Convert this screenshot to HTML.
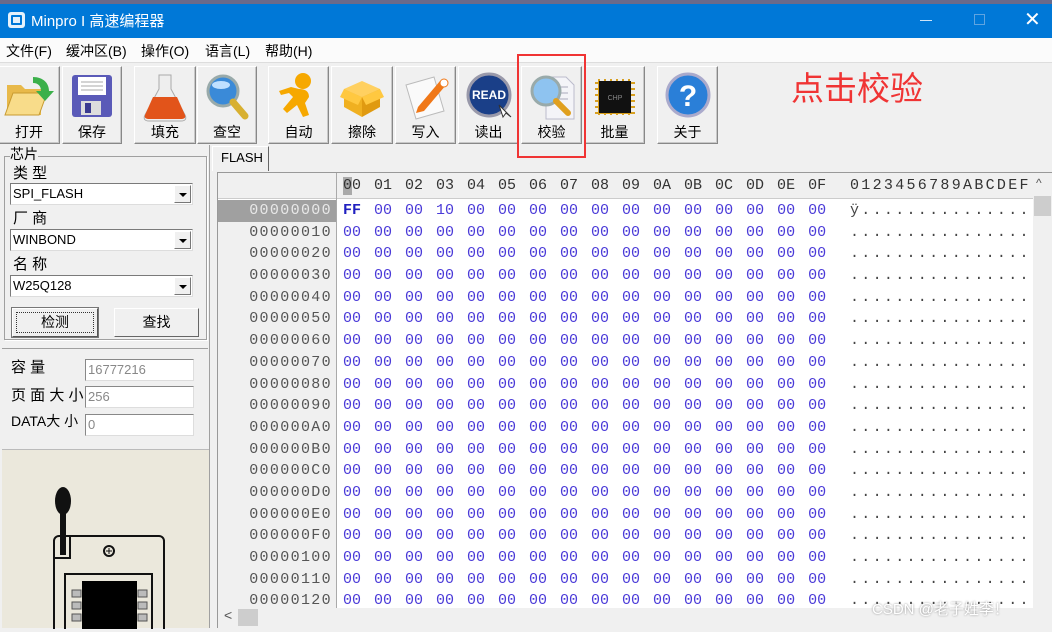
<!DOCTYPE html>
<html><head><meta charset="utf-8"><style>
*{margin:0;padding:0;box-sizing:border-box}
body{width:1052px;height:628px;overflow:hidden;background:#f0f0f0;font-family:"Liberation Sans","Noto Sans CJK SC",sans-serif;position:relative;font-size:14px;color:#000}
.a{position:absolute}
.title{left:0;top:0;width:1052px;height:38px;background:#0078d7;color:#fff}
.menu{left:0;top:38px;width:1052px;height:24px;background:#fbfbfb;font-size:14px}
.menu span{position:absolute;top:3px}
.btn{position:absolute;top:66px;height:78px;background:#f0f0f0;border:1px solid #fff;border-right-color:#888;border-bottom-color:#888;box-shadow:inset -1px -1px #c8c8c8}
.btn .l{position:absolute;bottom:1px;left:0;right:0;text-align:center;font-size:14px}
.btn svg{position:absolute;left:50%;top:4px;margin-left:-26px}
.grp{border:1px solid #a0a0a0;box-shadow:1px 1px #fff}
.sel{position:absolute;left:10px;width:183px;height:22px;background:#fff;border:1px solid #7a7a7a;border-right-color:#ddd;border-bottom-color:#ddd;font-size:13px;line-height:20px;padding-left:2px}
.sel i{position:absolute;right:1px;top:1px;width:17px;height:18px;background:#f0f0f0;border:1px solid #fff;border-right-color:#777;border-bottom-color:#777}
.sel i:after{content:"";position:absolute;left:4px;top:7px;border:4px solid transparent;border-top:4px solid #000}
.inp{position:absolute;left:85px;width:109px;height:22px;background:#fff;border:1px solid #888;border-right-color:#ddd;border-bottom-color:#ddd;font-size:13px;color:#888;line-height:20px;padding-left:2px}
.lab{position:absolute;font-size:15px}
.mono{font-family:"Liberation Mono",monospace;font-size:15px}
#rows{position:absolute;left:218px;top:200px;width:815px;height:408px;overflow:hidden}
.r{position:relative;height:21.7px;line-height:22px;white-space:nowrap}
.r b{position:absolute;left:0;top:0;width:118px;text-align:right;padding-right:4px;font-weight:normal;color:#555;letter-spacing:1.35px;background:#f0f0f0;height:22px}
.r s{position:absolute;left:125px;top:0;text-decoration:none;color:#4a3ad8;word-spacing:4px}
.r u{position:absolute;left:632px;top:0;text-decoration:none;color:#444;letter-spacing:2.3px}
</style></head><body>
<div class="a" style="left:0;top:0;width:1052px;height:4px;background:#6a6a8a"></div>
<div class="a title" style="top:4px;height:34px">
 <div class="a" style="left:8px;top:8px;width:17px;height:16px;background:#e6f2fb;border-radius:3px"><div class="a" style="left:3px;top:3px;width:11px;height:10px;border:2px solid #0078d7;border-radius:1px"></div></div>
 <div class="a" style="left:31px;top:6px;font-size:15px">Minpro I 高速编程器</div>
 <div class="a" style="left:920px;top:16px;width:12px;height:1px;background:#cfe4f7"></div>
 <div class="a" style="left:974px;top:10px;width:11px;height:11px;border:1px solid #5fa4e0"></div>
 <div class="a" style="left:1024px;top:3px;font-size:20px;color:#fff">✕</div>
</div>
<div class="a menu">
 <span style="left:6px">文件(F)</span><span style="left:66px">缓冲区(B)</span><span style="left:141px">操作(O)</span><span style="left:205px">语言(L)</span><span style="left:265px">帮助(H)</span>
</div>
<div class="a" style="left:0;top:62px;width:1052px;height:1px;background:#ddd"></div>

<div class="btn" style="left:-2px;width:62px"><svg width="52" height="52" viewBox="0 0 52 52"><path d="M4 14h14l4 4h16v26H4z" fill="#e8b94a"/><path d="M2 44l8-22h34l-8 22z" fill="#f8dc8a" stroke="#c89a30"/><path d="M30 6c10 0 16 6 16 14h5l-9 10-9-10h5c0-5-3-8-8-8z" fill="#3bb04a"/></svg><div class="l">打开</div></div>
<div class="btn" style="left:62px;width:60px"><svg width="52" height="52" viewBox="0 0 52 52"><rect x="6" y="4" width="40" height="42" rx="3" fill="#5a5ab8"/><rect x="12" y="6" width="28" height="18" fill="#fff"/><path d="M15 11h22M15 15h22M15 19h22" stroke="#aaa"/><rect x="15" y="30" width="20" height="14" fill="#ddd"/><rect x="19" y="32" width="6" height="10" fill="#3a3a90"/></svg><div class="l">保存</div></div>
<div class="btn" style="left:134px;width:62px"><svg width="52" height="52" viewBox="0 0 52 52"><path d="M20 4h12v14l14 26c2 4 0 6-4 6H10c-4 0-6-2-4-6l14-26z" fill="#eee" stroke="#aaa"/><path d="M14 26h24l8 18c1 3-1 4-4 4H10c-3 0-5-1-4-4z" fill="#e2541a"/></svg><div class="l">填充</div></div>
<div class="btn" style="left:197px;width:60px"><svg width="52" height="52" viewBox="0 0 52 52"><circle cx="22" cy="20" r="15" fill="#3a8ad8" stroke="#9aa" stroke-width="3"/><ellipse cx="20" cy="14" rx="9" ry="4" fill="#bfe0ff"/><path d="M32 31l12 14" stroke="#d8b030" stroke-width="7" stroke-linecap="round"/></svg><div class="l">查空</div></div>
<div class="btn" style="left:268px;width:61px"><svg width="52" height="52" viewBox="0 0 52 52"><circle cx="30" cy="10" r="8" fill="#f6a800"/><path d="M26 18c6 0 10 2 10 8l-4 6 4 12-6 2-6-12-10 8-4-4 10-12-4-4-8 2-2-4 12-4z" fill="#f6a800"/></svg><div class="l">自动</div></div>
<div class="btn" style="left:331px;width:62px"><svg width="52" height="52" viewBox="0 0 52 52"><path d="M8 18l18-8 18 8-18 8z" fill="#ffd060"/><path d="M8 18v18l18 10V26z" fill="#f0b020"/><path d="M44 18v18L26 46V26z" fill="#e09a10"/><path d="M8 18l-4 8 18 8 4-8zM44 18l4 8-18 8-4-8z" fill="#ffc840"/></svg><div class="l">擦除</div></div>
<div class="btn" style="left:395px;width:61px"><svg width="52" height="52" viewBox="0 0 52 52"><path d="M6 14l28-8 10 34-28 8z" fill="#fafafa" stroke="#bbb"/><path d="M18 36l22-26 6 4-22 26-8 2z" fill="#f07818"/><circle cx="44" cy="12" r="4" fill="#fff" stroke="#f07818"/></svg><div class="l">写入</div></div>
<div class="btn" style="left:458px;width:61px"><svg width="52" height="52" viewBox="0 0 52 52"><circle cx="26" cy="24" r="21" fill="#1a3f88" stroke="#99a" stroke-width="3"/><text x="26" y="28" font-family="Liberation Sans" font-weight="bold" font-size="12" fill="#fff" text-anchor="middle">READ</text><path d="M36 34l4 12 3-4 5 4z" fill="#fff" stroke="#333"/></svg><div class="l">读出</div></div>
<div class="btn" style="left:521px;width:61px"><svg width="52" height="52" viewBox="0 0 52 52"><path d="M20 6h20l8 8v34H20z" fill="#f4f4f8" stroke="#bbc"/><path d="M26 16h16M26 22h16M26 28h16" stroke="#aab"/><circle cx="20" cy="20" r="14" fill="#8ec3f0" stroke="#9aa" stroke-width="3"/><path d="M30 30l12 12" stroke="#e0a020" stroke-width="6" stroke-linecap="round"/></svg><div class="l">校验</div></div>
<div class="btn" style="left:584px;width:61px"><svg width="52" height="52" viewBox="0 0 52 52"><g stroke="#d8a020" stroke-width="2"><path d="M10 8v36M16 8v36M22 8v36M28 8v36M34 8v36M40 8v36M6 12h40M6 18h40M6 24h40M6 30h40M6 36h40M6 42h40"/></g><rect x="10" y="10" width="32" height="32" fill="#111"/><text x="26" y="29" font-size="7" fill="#888" text-anchor="middle" font-family="Liberation Sans">CHP</text></svg><div class="l">批量</div></div>
<div class="btn" style="left:657px;width:61px"><svg width="52" height="52" viewBox="0 0 52 52"><circle cx="26" cy="24" r="21" fill="#2a7fd8" stroke="#aac" stroke-width="3"/><text x="26" y="35" font-family="Liberation Sans" font-weight="bold" font-size="30" fill="#fff" text-anchor="middle">?</text></svg><div class="l">关于</div></div>

<div class="a" style="left:517px;top:54px;width:69px;height:104px;border:2px solid #f03434"></div>
<div class="a" style="left:791px;top:62px;font-size:33px;color:#f03434">点击校验</div>

<div class="a" style="left:0;top:145px;width:210px;height:483px;border-right:1px solid #a0a0a0"></div>
<div class="a grp" style="left:4px;top:156px;width:203px;height:184px"></div>
<div class="lab" style="left:10px;top:145px;background:#f0f0f0;line-height:18px;font-size:14px">芯片</div>
<div class="lab" style="left:13px;top:162px">类 型</div>
<div class="sel" style="top:183px">SPI_FLASH<i></i></div>
<div class="lab" style="left:13px;top:207px">厂 商</div>
<div class="sel" style="top:229px">WINBOND<i></i></div>
<div class="lab" style="left:13px;top:253px">名 称</div>
<div class="sel" style="top:275px">W25Q128<i></i></div>
<div class="a" style="left:12px;top:308px;width:86px;height:29px;border:1px solid #fff;border-right-color:#555;border-bottom-color:#555;text-align:center;line-height:27px;font-size:14px;box-shadow:0 0 0 1px #777"><div class="a" style="left:3px;top:3px;right:3px;bottom:3px;border:1px dotted #333"></div>检测</div>
<div class="a" style="left:114px;top:308px;width:85px;height:29px;border:1px solid #fff;border-right-color:#666;border-bottom-color:#666;text-align:center;line-height:27px;font-size:14px">查找</div>
<div class="a" style="left:2px;top:348px;width:206px;height:1px;background:#a0a0a0"></div>
<div class="lab" style="left:11px;top:356px">容 量</div>
<div class="inp" style="top:359px">16777216</div>
<div class="lab" style="left:11px;top:384px">页 面 大 小</div>
<div class="inp" style="top:386px">256</div>
<div class="lab" style="left:11px;top:411px;font-size:14px">DATA大 小</div>
<div class="inp" style="top:414px">0</div>
<div class="a" style="left:2px;top:449px;width:207px;height:179px;background:#ebe8dc;border-top:1px solid #bbb">
 <svg width="207" height="179" viewBox="0 0 207 179">
  <rect x="52" y="86" width="110" height="100" rx="5" fill="none" stroke="#111" stroke-width="2"/>
  <path d="M52 108h16v-22" fill="none" stroke="#111" stroke-width="2"/>
  <rect x="58" y="50" width="6" height="55" fill="#111"/><ellipse cx="61" cy="51" rx="8" ry="14" fill="#111"/>
  <circle cx="107" cy="101" r="5" fill="none" stroke="#111" stroke-width="2"/><path d="M104 101h6M107 98v6" stroke="#111"/>
  <rect x="63" y="124" width="87" height="60" fill="none" stroke="#111" stroke-width="2"/>
  <rect x="80" y="131" width="55" height="50" fill="#000"/>
  <g fill="#bbb" stroke="#555"><rect x="70" y="140" width="9" height="7"/><rect x="70" y="152" width="9" height="7"/><rect x="70" y="164" width="9" height="7"/><rect x="136" y="140" width="9" height="7"/><rect x="136" y="152" width="9" height="7"/><rect x="136" y="164" width="9" height="7"/></g>
 </svg>
</div>

<div class="a" style="left:212px;top:146px;width:57px;height:25px;border:1px solid #fff;border-right-color:#666;border-bottom:none;font-size:13px;line-height:22px;padding-left:8px">FLASH</div>
<div class="a" style="left:217px;top:172px;width:835px;height:456px;background:#fff;border:1px solid #999"></div>
<div class="a" style="left:218px;top:173px;width:815px;height:26px;background:#f0f0f0;border-bottom:1px solid #ccc"></div>
<div class="a mono" style="left:343px;top:177px;color:#333;white-space:nowrap;line-height:18px;width:690px;height:20px">
<span style="position:absolute;left:0;top:0;background:#aaa;width:9px;height:18px"></span>
<span style="position:absolute;left:0;top:0;word-spacing:4px">00 01 02 03 04 05 06 07 08 09 0A 0B 0C 0D 0E 0F</span><span style="position:absolute;left:507px;top:0;letter-spacing:2.3px">0123456789ABCDEF</span></div>

<div id="rows" class="mono">
<div class="r"><b style="background:#a0a0a0;color:#e8e8e8">00000000</b><s><span style="color:#2020c0;font-weight:bold">FF</span> 00 00 10 00 00 00 00 00 00 00 00 00 00 00 00</s><u>ÿ...............</u></div>
<div class="r"><b>00000010</b><s>00 00 00 00 00 00 00 00 00 00 00 00 00 00 00 00</s><u>................</u></div>
<div class="r"><b>00000020</b><s>00 00 00 00 00 00 00 00 00 00 00 00 00 00 00 00</s><u>................</u></div>
<div class="r"><b>00000030</b><s>00 00 00 00 00 00 00 00 00 00 00 00 00 00 00 00</s><u>................</u></div>
<div class="r"><b>00000040</b><s>00 00 00 00 00 00 00 00 00 00 00 00 00 00 00 00</s><u>................</u></div>
<div class="r"><b>00000050</b><s>00 00 00 00 00 00 00 00 00 00 00 00 00 00 00 00</s><u>................</u></div>
<div class="r"><b>00000060</b><s>00 00 00 00 00 00 00 00 00 00 00 00 00 00 00 00</s><u>................</u></div>
<div class="r"><b>00000070</b><s>00 00 00 00 00 00 00 00 00 00 00 00 00 00 00 00</s><u>................</u></div>
<div class="r"><b>00000080</b><s>00 00 00 00 00 00 00 00 00 00 00 00 00 00 00 00</s><u>................</u></div>
<div class="r"><b>00000090</b><s>00 00 00 00 00 00 00 00 00 00 00 00 00 00 00 00</s><u>................</u></div>
<div class="r"><b>000000A0</b><s>00 00 00 00 00 00 00 00 00 00 00 00 00 00 00 00</s><u>................</u></div>
<div class="r"><b>000000B0</b><s>00 00 00 00 00 00 00 00 00 00 00 00 00 00 00 00</s><u>................</u></div>
<div class="r"><b>000000C0</b><s>00 00 00 00 00 00 00 00 00 00 00 00 00 00 00 00</s><u>................</u></div>
<div class="r"><b>000000D0</b><s>00 00 00 00 00 00 00 00 00 00 00 00 00 00 00 00</s><u>................</u></div>
<div class="r"><b>000000E0</b><s>00 00 00 00 00 00 00 00 00 00 00 00 00 00 00 00</s><u>................</u></div>
<div class="r"><b>000000F0</b><s>00 00 00 00 00 00 00 00 00 00 00 00 00 00 00 00</s><u>................</u></div>
<div class="r"><b>00000100</b><s>00 00 00 00 00 00 00 00 00 00 00 00 00 00 00 00</s><u>................</u></div>
<div class="r"><b>00000110</b><s>00 00 00 00 00 00 00 00 00 00 00 00 00 00 00 00</s><u>................</u></div>
<div class="r"><b>00000120</b><s>00 00 00 00 00 00 00 00 00 00 00 00 00 00 00 00</s><u>................</u></div>
</div>
<div class="a" style="left:336px;top:173px;width:1px;height:435px;background:#aaa"></div>
<div class="a" style="left:218px;top:608px;width:834px;height:20px;background:#f0f0f0"></div>
<div class="a" style="left:238px;top:609px;width:20px;height:17px;background:#cdcdcd"></div>
<div class="a" style="left:224px;top:607px;font-size:14px;color:#555">&lt;</div>
<div class="a" style="left:1033px;top:173px;width:19px;height:435px;background:#f0f0f0"></div>
<div class="a" style="left:1034px;top:196px;width:17px;height:20px;background:#cdcdcd"></div>
<div class="a" style="left:1036px;top:176px;font-size:12px;color:#555">^</div>
<div class="a" style="left:872px;top:598px;font-size:15px;color:#fff;text-shadow:0 0 2px #888">CSDN @老子姓李！</div>
</body></html>
